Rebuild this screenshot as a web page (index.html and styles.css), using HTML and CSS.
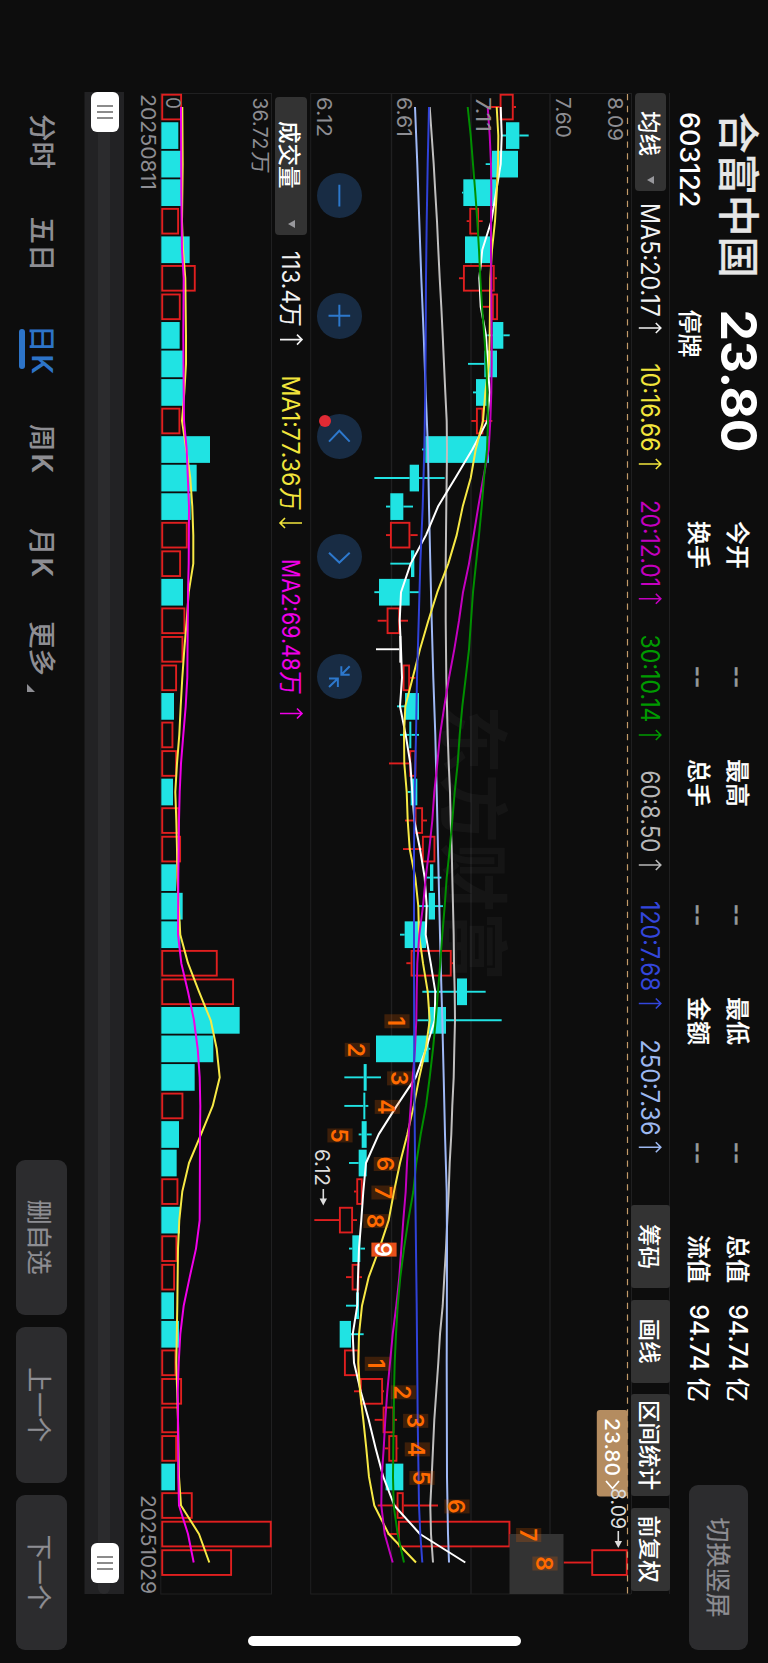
FILE: index.html
```html
<!DOCTYPE html>
<html lang="zh-CN">
<head>
<meta charset="utf-8">
<title>合富中国 603122</title>
<link rel="stylesheet" href="styles.css">
</head>
<body>
<div class="stage">
  <header class="header">
    <div class="quote">
      <div class="name">合富中国</div>
      <div class="price">23.80</div>
      <div class="code">603122</div>
      <div class="status">停牌</div>
    </div>
    <dl class="stats">
      <div class="stat"><dt>今开</dt><dd>--</dd></div>
      <div class="stat"><dt>最高</dt><dd>--</dd></div>
      <div class="stat"><dt>最低</dt><dd>--</dd></div>
      <div class="stat"><dt>总值</dt><dd class="num">94.74<i>亿</i></dd></div>
      <div class="stat"><dt>换手</dt><dd>--</dd></div>
      <div class="stat"><dt>总手</dt><dd>--</dd></div>
      <div class="stat"><dt>金额</dt><dd>--</dd></div>
      <div class="stat"><dt>流值</dt><dd class="num">94.74<i>亿</i></dd></div>
    </dl>
    <button class="btn switch">切换竖屏</button>
  </header>

  <div class="toolbar">
    <div class="pill"><span>均线</span><i class="caret"></i></div>
    <svg class="legend" id="maLegend" viewBox="191 98 1000 39" width="1000" height="39"></svg>
    <div class="tools">
      <button>筹码</button><button>画线</button><button class="wide">区间统计</button><button>前复权</button>
    </div>
  </div>

  <div class="main-chart">
    <svg id="kline" viewBox="93 137 1502 321" width="1502" height="321"></svg>
    <div class="controls">
      <button><svg viewBox="-23 -23 46 46"><path d="M-11 0H11"/></svg></button>
      <button><svg viewBox="-23 -23 46 46"><path d="M-11 0H11M0-11V11"/></svg></button>
      <button><i class="dot"></i><svg viewBox="-23 -23 46 46"><path d="M5-10.5L-6 0L5 10.5"/></svg></button>
      <button><svg viewBox="-23 -23 46 46"><path d="M-4-10.5L6 0L-4 10.5"/></svg></button>
      <button><svg viewBox="-23 -23 46 46"><path d="M-10.5-2H-2V-10.5M-2-2L-10.5-10.5M10.5 1.5H1.8V10.5M1.8 1.5L10.5 10.5"/></svg></button>
    </div>
  </div>

  <div class="vol-bar">
    <div class="pill"><span>成交量</span><i class="caret"></i></div>
    <svg class="legend" id="volLegend" viewBox="235 458 520 38" width="520" height="38"></svg>
  </div>

  <svg class="volume" id="volume" viewBox="93 496 1502 148" width="1502" height="148"></svg>

  <div class="slider">
    <div class="groove"></div>
    <div class="handle"><i></i><i></i><i></i></div>
    <div class="handle end"><i></i><i></i><i></i></div>
  </div>

  <footer class="footer">
    <nav class="tabs">
      <a>分时</a><a>五日</a><a class="active">日<b>K</b></a><a>周<b>K</b></a><a>月<b>K</b></a><a class="more">更多</a>
    </nav>
    <div class="actions">
      <button class="btn">删自选</button><button class="btn">上一个</button><button class="btn">下一个</button>
    </div>
  </footer>
  <div class="home-bar"></div>
</div>
<script src="chart.js"></script>
</body>
</html>
```

FILE: styles.css
```css
* { box-sizing: border-box; margin: 0; padding: 0; }
html, body { width: 768px; height: 1663px; overflow: hidden; background: #0d0d0d; }
body { position: relative; }
button { border: 0; font: inherit; color: inherit; background: none; }
i { font-style: normal; }
svg { display: block; }

/* landscape screen turned a quarter clockwise */
.stage {
  position: absolute;
  top: 0;
  left: 0;
  width: 1663px;
  height: 768px;
  transform-origin: 0 0;
  transform: translateX(768px) rotate(90deg);
  display: grid;
  grid-template-rows: 98px 39px 321px 38px 148px 39px 85px;
  font-family: Inter, "Noto Sans CJK SC", sans-serif;
  color: #fff;
  background: #0d0d0d;
}

.header { display: flex; padding-left: 112px; }
.quote {
  display: grid;
  grid-template-columns: 197.5px 211.5px;
  grid-template-rows: 59px 40px;
  align-items: center;
}
.name { padding-top: 2px; font-size: 41.5px; line-height: 59px; font-weight: 500; color: #e6e6e6; white-space: nowrap; -webkit-text-stroke: 0.2px #e6e6e6; }
.price { font-size: 50px; line-height: 59px; font-weight: 700; letter-spacing: -0.3px; }
.code { font-size: 27px; line-height: 40px; font-weight: 500; letter-spacing: -0.1px; }
.status { font-size: 24px; line-height: 40px; font-weight: 500; }

.stats {
  display: grid;
  grid-template-columns: repeat(4, 167px);
  grid-template-rows: 39px 39px;
  column-gap: 71px;
  padding-top: 11px;
  width: 964px;
}
.stat { display: flex; justify-content: space-between; align-items: center; font-size: 24px; line-height: 39px; font-weight: 500; white-space: nowrap; }
.stat dt { -webkit-text-stroke: 0.2px #fff; }
.stat dd { color: #98989c; -webkit-text-stroke: 0.5px #98989c; }
.stat dd.num { color: #fff; font-size: 25px; letter-spacing: -0.2px; display: flex; gap: 7px; -webkit-text-stroke: 0; }
.num i { font-size: 24px; letter-spacing: 0; }

.btn { background: #2c2c2e; color: #8e8e93; border-radius: 9px; font-size: 25px; font-weight: 400; -webkit-text-stroke: 0.2px #8e8e93; }
.switch { width: 165px; height: 59px; margin-top: 20px; padding-bottom: 3px; }

.toolbar {
  display: flex;
  align-items: center;
  margin: 0 69px 0 93px;
  border-top: 1px solid #1f1f20;
  border-bottom: 1px solid #1f1f20;
}
.pill {
  display: flex;
  align-items: center;
  justify-content: space-between;
  width: 98px;
  height: 31px;
  padding: 0 7px 1px 18px;
  border-radius: 4px;
  background: #333;
  font-size: 22.5px;
  font-weight: 500;
  white-space: nowrap;
}
.caret { border: 4px solid transparent; border-top: 7px solid #98989c; border-bottom: 0; }
.legend { flex: none; }
.tools { display: flex; gap: 11.5px; margin-left: 14px; }
.tools button { width: 83px; height: 39px; padding-bottom: 1px; border-radius: 3px; background: #333; font-size: 22.5px; font-weight: 500; white-space: nowrap; }
.tools .wide { width: 102px; }

.main-chart { position: relative; margin-left: 93px; }
.controls { position: absolute; left: 80px; bottom: 7px; display: flex; gap: 75px; }
.controls button { position: relative; width: 45.3px; height: 45.3px; border-radius: 50%; background: #182c44; }
.controls svg { width: 45.3px; height: 45.3px; fill: none; stroke: #2d78cc; stroke-width: 2; }
.dot { position: absolute; left: 1px; bottom: 2px; width: 12px; height: 12px; border-radius: 50%; background: #e02a34; }

.vol-bar { display: flex; align-items: center; margin-left: 97px; }
.vol-bar .pill { width: 138px; height: 32px; padding-left: 24px; }
.volume { margin-left: 93px; }

.slider {
  position: relative;
  display: flex;
  align-items: center;
  justify-content: space-between;
  margin: 0 69px 0 92px;
  height: 39px;
  padding: 0 11px 1px 0;
  background: #222224;
  box-shadow: 0 1px 0 #171718;
}
.groove { position: absolute; left: 0; right: 0; top: 13.5px; height: 12px; border-radius: 0 6px 6px 0; background: #2b2b2d; }
.handle {
  position: relative;
  display: flex;
  align-items: center;
  justify-content: center;
  gap: 4.5px;
  width: 40px;
  height: 28px;
  border-radius: 6px;
  background: #fff;
}
.handle i { width: 1.7px; height: 15.5px; background: #8b8b8b; }

.footer { display: flex; justify-content: space-between; padding: 18px 13px 0 114px; }
.tabs { display: grid; grid-template-columns: 102.5px 108.5px 99px 104px 93px 80px; height: 51px; }
.tabs a { position: relative; justify-self: start; font-size: 27.5px; line-height: 51px; font-weight: 500; color: #8e8e93; white-space: nowrap; }
.tabs b { margin-left: 2px; font-size: 28px; font-weight: 600; }
.tabs .active { color: #2d74c8; }
.tabs .active::after { content: ""; position: absolute; left: 4px; width: 40px; bottom: 3px; height: 6px; border-radius: 3px; background: #2d74c8; }
.tabs .more::after { content: ""; position: absolute; right: -16px; bottom: 11px; border-left: 8px solid transparent; border-bottom: 8px solid #8e8e93; }
.actions { display: flex; gap: 12px; }
.actions .btn { width: 155.5px; height: 51px; }

.home-bar { position: absolute; right: 17px; top: 247px; width: 10px; height: 273px; border-radius: 5px; background: #fff; }

/* chart text */
.axis { font-size: 20px; fill: #8e8e93; }
.tip { font-size: 20px; fill: #ddd; }
.tag-text { font-size: 20px; fill: #fff; font-weight: 500; }
.mark { font-size: 23px; font-weight: 600; text-anchor: middle; }
.ma { font-size: 25px; }
.vma { font-size: 24px; }
.watermark { font-size: 70px; font-weight: 700; fill: #fff; fill-opacity: 0.035; }
```

FILE: chart.js
```js
const NS = 'http://www.w3.org/2000/svg';
const RED = '#e01f1f', CYAN = '#20e3e3';
const STEP = 28.54, FIRST = 107;
const cx = i => FIRST + STEP * i;
const py = v => 468 - v / 3;
const vy = v => 768 - v / 3;

function add(root, tag, attrs, text) {
  const el = document.createElementNS(NS, tag);
  for (const k in attrs) el.setAttribute(k, attrs[k]);
  if (text !== undefined) el.textContent = text;
  root.appendChild(el);
  return el;
}
function label(root, cls, x, y, len, text, fill) {
  const a = { class: cls, x, y, textLength: len, lengthAdjust: 'spacingAndGlyphs' };
  if (fill) a.fill = fill;
  add(root, 'text', a, text);
}
function lineTo(root, x1, y1, x2, y2, stroke, w) {
  add(root, 'line', { x1, y1, x2, y2, stroke, 'stroke-width': w || 1 });
}
function box(root, kind, i, top, bottom) {
  const h = bottom - top;
  if (kind === 'r') {
    add(root, 'rect', { x: cx(i) - 12.3, y: top + .9, width: 24.7, height: Math.max(h - 1.8, 1), fill: '#0d0d0d', stroke: RED, 'stroke-width': 1.9 });
  } else {
    add(root, 'rect', { x: cx(i) - 13.3, y: top, width: 26.7, height: h, fill: kind === 'c' ? CYAN : '#fff' });
  }
}
function curve(root, pts, scale, stroke) {
  const p = pts.map((q, i) => Array.isArray(q) ? [cx(q[0]), scale(q[1])] : [cx(i), scale(q)]);
  add(root, 'polyline', { points: p.map(a => a[0].toFixed(1) + ',' + a[1].toFixed(1)).join(' '), fill: 'none', stroke, 'stroke-width': 2, 'stroke-linejoin': 'round' });
}

/* kind, body low, body high, wick low, wick high */
const candles = [
  ['r',599,641,562,648],['c',618,658,603,686],['c',576,654,557,654],['c',490,588,486,588],['r',508,537,500,548],
  ['c',495,572,495,572],['r',489,584,477,591],['r',576,594,549,594],['c',578,610,562,629],['c',553,591,504,591],
  ['c',528,560,519,560],['r',528,550,514,577],['c',376,567,366,567],['c',329,357,223,434],['c',271,310,258,339],
  ['r',270,331,258,353],['c',333,343,271,343],['c',237,329,223,357],['r',260,300,233,324],['w',298,304,228,304],
  ['r',308,330,308,346],['c',315,357,291,357],['c',328,334,300,357],['r',328,349,267,349],['c',332,352,323,352],
  ['r',344,369,315,381],['r',366,406,309,406],['c',390,400,380,424],['c',386,405,357,429],['c',314,378,300,378],
  ['r',332,455,319,461],['c',471,501,367,557],['c',385,438,352,605],['c',228,386,228,391],['c',191,200,133,243],
  ['c',190,196,133,205],['c',185,200,176,215],['c',176,200,147,200],['r',169,188,162,190],['r',117,159,43,171],
  ['c',157,181,147,195],['r',155,178,138,186],['c',168,177,138,177],['c',119,153,119,191],['r',132,178,132,178],
  ['r',180,249,162,252],['r',248,283,224,291],['r',265,292,255,295],['c',257,310,257,310],['r',290,311,233,414],
  ['r',294,631,262,631],['r',874,983,791,983]
];
const ma = {
  '#c0bfbf': [389,395,401,406,411,415,419,424,428,432,436,440,441,440,439,438,437,437,437,438,439,441,443,446,450,452,455,457,459,461,462,464,465,463,461,457,454,449,446,442,438,433,428,420,415,409,403,399,395,391,393,399],
  '#9fb8f5': [[0,345],[2,352],[4,358],[6,364],[8,371],[10,377],[12,384],[14,387],[16,391],[18,395],[20,400],[22,406],[24,410],[26,414],[28,418],[30,422],[32,427],[34,431],[36,435],[38,440],[40,441],[44,440],[48,441],[50,444],[51,447]],
  '#fff': [602,605,602,588,574,547,538,542,558,563,569,562,517,466,414,378,332,303,299,303,306,300,317,331,337,343,360,374,380,377,392,406,404,378,347,290,236,198,190,184,177,174,172,158,162,182,206,227,250,283,360,496],
  '#f7e945': [590,595,594,590,585,576,571,570,569,567,556,549,527,512,488,470,445,412,385,360,338,316,312,313,320,323,329,346,355,357,369,383,389,377,358,341,322,300,282,266,238,206,186,177,175,180,190,199,207,223,266,348],
  '#c400bf': [563,569,573,574,573,573,574,574,575,575,574,571,566,550,535,521,507,489,477,463,447,433,420,412,403,397,388,377,369,358,352,350,349,345,338,332,326,321,317,310,304,298,289,278,270,262,256,251,245,244,254,278],
  '#008f00': [503,512,519,526,532,537,541,546,553,559,562,564,561,552,545,537,528,519,513,507,497,487,479,473,464,457,449,440,434,427,421,414,407,399,389,378,362,349,340,325,312,301,293,288,284,282,281,280,279,281,293,312],
  '#3042d8': [[0,387],[2,383],[4,380],[6,378],[8,377],[10,376],[12,373],[14,368],[16,361],[18,356],[20,351],[22,348],[24,344],[26,342],[30,342],[34,343],[38,346],[42,350],[46,353],[49,357],[50,361],[51,367]]
};
const marks = [
  [32,291,'1'],[33,172,'2'],[34,299,'3'],[35,262,'4'],[36,120,'5'],[37,259,'6'],[38,252,'7'],[39,228,'8'],[40,252,'9'],
  [44,232,'1'],[45,310,'2'],[46,347,'3'],[47,352,'4'],[48,366,'5'],[49,471,'6'],[50,686,'7'],[51,735,'8']
];

/* price chart */
const k = document.getElementById('kline');
add(k, 'rect', { x: 93.5, y: 130, width: 1500.5, height: 327.3, fill: 'none', stroke: '#202021' });
[376.5, 297, 218].forEach(y => lineTo(k, 93, y, 1594, y, '#202021', 1.4));
label(k, 'watermark', 705, 321, 276, '东方财富');
candles.forEach(([t, lo, hi, wl, wh], i) => {
  const color = t === 'r' ? RED : t === 'c' ? CYAN : '#fff';
  if (wh > hi) lineTo(k, cx(i), py(wh), cx(i), py(hi), color, 1.9);
  if (wl < lo) lineTo(k, cx(i), py(lo), cx(i), py(wl), color, 1.9);
  box(k, t, i, py(hi), py(lo));
});
add(k, 'line', { x1: 94, y1: 140.5, x2: 1594, y2: 140.5, stroke: '#c29a69', 'stroke-width': 1.2, 'stroke-dasharray': '6.3 5.55' });
for (const c in ma) curve(k, ma[c], py, c);
add(k, 'rect', { x: 1534, y: 204.5, width: 60, height: 54, fill: '#333' });
marks.forEach(([i, v, t]) => {
  const x = cx(i) + 1, y = py(v), hot = t === '9';
  add(k, 'rect', { x: x - 7, y: y - 12.6, width: 14, height: 25.2, fill: hot ? '#e8501a' : '#ff6a00', 'fill-opacity': hot ? 1 : .2 });
  add(k, 'text', { class: 'mark', x, y: y + 9, fill: hot ? '#fff' : '#ff6a00' }, t);
});
label(k, 'axis', 97, 451, 40, '6.12');
label(k, 'axis', 97, 371, 40, '6.61');
label(k, 'axis', 97, 292, 35, '7.11');
label(k, 'axis', 97, 212, 41, '7.60');
label(k, 'axis', 97, 160, 44, '8.09');
label(k, 'tip', 1149, 453, 37, '6.12');
add(k, 'path', { d: 'M1189 444.7H1199', stroke: '#ddd', 'stroke-width': 1.6 });
add(k, 'path', { d: 'M1198.5 441L1205.5 444.7L1198.5 448.4Z', fill: '#ddd' });
add(k, 'rect', { x: 1410, y: 140.2, width: 86.5, height: 31, rx: 3, fill: '#b48c60' });
label(k, 'tag-text', 1418, 163.5, 58, '23.80');
add(k, 'path', { d: 'M1481 162L1488.5 155.5L1481 149', fill: 'none', stroke: '#fff', 'stroke-width': 1.8 });
label(k, 'tip', 1488, 157, 41, '8.09');
add(k, 'path', { d: 'M1531 149.7H1542', stroke: '#ddd', 'stroke-width': 1.6 });
add(k, 'path', { d: 'M1541 146L1548 149.7L1541 153.4Z', fill: '#ddd' });

/* legends */
function arrow(root, x, y, color, down) {
  const d = down ? `M${x} ${y - 11}V${y + 10.5}M${x - 5} ${y + 6}L${x} ${y + 11}L${x + 5} ${y + 6}`
                 : `M${x} ${y + 11}V${y - 10.5}M${x - 5} ${y - 6}L${x} ${y - 11}L${x + 5} ${y - 6}`;
  add(root, 'path', { d, fill: 'none', stroke: color, 'stroke-width': 1.6 });
}
const ml = document.getElementById('maLegend');
[
  ['MA5:20.17', 203, 114, 328, '#f2f2f2'], ['10:16.66', 363.5, 88, 464, '#f2e53c'], ['20:12.01', 500, 87, 598.7, '#c400bf'],
  ['30:10.14', 634.5, 88, 735, '#009a00'], ['60:8.50', 770.5, 82, 865, '#b8b8b8'], ['120:7.68', 901, 90, 1003.5, '#3346dc'],
  ['250:7.36', 1039.5, 96, 1147.3, '#9db8f0']
].forEach(([t, x, len, ax, c]) => { label(ml, 'ma', x, 127.3, len, t, c); arrow(ml, ax, 118.2, c); });
const vl = document.getElementById('volLegend');
[
  ['113.4', 251, 53, 339.6, '#f2f2f2', 303], ['MA1:77.36', 375.5, 111, 523, '#f2e53c', 487, true], ['MA2:69.48', 559, 112, 713.5, '#f000e8', 671]
].forEach(([t, x, len, ax, c, wx, down]) => {
  label(vl, 'vma', x, 485.8, len, t, c);
  label(vl, 'vma', wx, 486, 24, '万', c);
  arrow(vl, ax, 477, c, down);
});

/* volume chart */
const v = document.getElementById('volume');
const vols = 'r546 c535 c543 c543 r537 c569 r587 r542 c539 c549 c549 r541 c630 c590 c572 r563 r543 c549 r556 r550 r531 c522 r520 r531 c519 r538 r543 c528 c548 c541 r653 r702 c719 c640 c584 r550 c537 c530 r535 c540 r532 r525 c522 c537 r529 r546 r536 r531 c525 r578 r815 r696'.split(' ');
add(v, 'rect', { x: 93.5, y: 496.5, width: 1500.5, height: 110.7, fill: 'none', stroke: '#202021' });
vols.forEach((s, i) => box(v, s[0], i, vy(+s.slice(1)), vy(484)));
curve(v, [[0,547],[2,548],[4,546],[5,549],[6,556],[8,558],[9,558],[10,553],[11,546],[12,559],[13,571],[14,577],[15,580],[16,580],[17,566],[18,560],[19,553],[20,547],[21,542],[22,538],[23,531],[24,526],[25,529],[26,531],[27,532],[28,536],[29,541],[30,564],[31,597],[32,632],[33,650],[34,659],[35,638],[36,603],[37,567],[38,547],[39,538],[40,534],[42,532],[44,529],[46,534],[48,537],[49,543],[50,597],[51,628]], vy, '#f7e945');
curve(v, [[0,543],[3,544],[5,546],[6,551],[8,550],[10,551],[11,552],[12,560],[14,567],[16,566],[17,564],[20,562],[21,557],[22,550],[23,543],[24,539],[25,537],[27,535],[29,534],[30,544],[31,564],[32,582],[33,593],[34,599],[35,601],[36,600],[39,599],[40,588],[41,569],[42,551],[43,541],[44,536],[45,533],[46,534],[48,535],[49,537],[50,564],[51,581]], vy, '#f000e8');
label(v, 'axis', 97.5, 515.5, 52, '36.72');
label(v, 'axis', 151, 515, 23, '万');
label(v, 'axis', 97, 602.5, 12, '0');
label(v, 'axis', 94, 627, 96, '20250811');
label(v, 'axis', 1495, 627, 99, '20251029');
```
